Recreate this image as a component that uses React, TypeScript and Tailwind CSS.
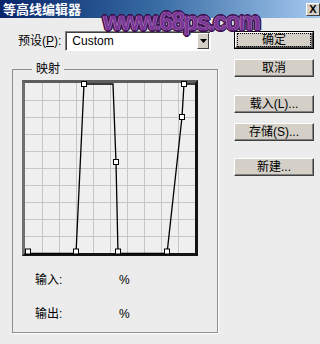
import React from "react";

const cjk = { fontFamily: '"Liberation Sans", "Noto Sans CJK SC", sans-serif' };

const points: [number, number][] = [
  [0, 170],
  [51, 170],
  [59, 1],
  [91, 79],
  [93, 170],
  [142, 170],
  [157, 34],
  [159, 1],
];

function ContourGraph() {
  const lines = [17, 34, 51, 68, 85, 102, 119, 136, 153];
  return (
    <div className="w-[176px] h-[176px] border-[3px] border-t-[#5e5e5e] border-l-[#6e6e6e] border-r-[#141414] border-b-[#141414] bg-[#efefef]">
      <svg width="170" height="170" viewBox="0 0 170 170" className="block overflow-visible">
        {lines.map((v) => (
          <g key={v}>
            <line x1={v + 0.5} y1="0" x2={v + 0.5} y2="170" stroke="#c6c6c6" strokeWidth="1" />
            <line x1="0" y1={v + 0.5} x2="170" y2={v + 0.5} stroke="#c6c6c6" strokeWidth="1" />
          </g>
        ))}
        <path
          d="M0 170.5 L51 170.5 L59 1 L88 1 L91 79 L93 170.5 L142 170.5 L157 34 L159 1 L170 1"
          fill="none"
          stroke="#000"
          strokeWidth="1.3"
        />
        {points.map(([x, y], i) => (
          <rect
            key={i}
            x={Math.max(x - 2.5, 0.5)}
            y={Math.min(y - 2.5, 166)}
            width="5"
            height="5"
            fill="#fff"
            stroke="#000"
            strokeWidth="1"
          />
        ))}
      </svg>
    </div>
  );
}

function Btn({ label, focus = false, className = "" }: { label: string; focus?: boolean; className?: string }) {
  return (
    <div
      className={`w-[80px] h-[18px] ${focus ? "border border-black" : ""} ${className}`}
    >
      <div className="w-full h-full bg-[#d4d0c8] border border-t-white border-l-white border-r-[#404040] border-b-[#404040] shadow-[inset_-1px_-1px_0_#808080] flex items-center justify-center">
        <span
          className={`text-[12px] leading-[12px] text-black px-[2px] ${focus ? "outline outline-1 outline-dotted outline-black w-[72px] h-[12px] text-center" : ""}`}
        >
          {label}
        </span>
      </div>
    </div>
  );
}

export default function App() {
  return (
    <div className="relative w-[320px] h-[344px] overflow-hidden bg-[#ececec]" style={cjk}>
      <div className="h-[18px] flex items-center justify-between pl-[3px] pr-[0px] bg-gradient-to-r from-[#0a246a] via-[#3a6ea5] to-[#a6caf0]">
        <span className="text-white font-bold text-[13px] leading-[13px]">等高线编辑器</span>
        <div className="w-[14px] h-[13px] bg-[#d4d0c8] border border-t-white border-l-white border-r-[#404040] border-b-[#404040] flex items-center justify-center text-[11px] font-bold leading-none text-black">
          X
        </div>
      </div>

      <div className="flex">
        <div className="w-[234px] pl-[12px]">
          <div className="flex items-center mt-[13px] h-[20px]">
            <span className="ml-[6px] text-[12px] text-black">
              预设(<span className="underline">P</span>):
            </span>
            <div className="ml-[4px] w-[146px] h-[20px] bg-white border border-t-[#808080] border-l-[#808080] border-r-white border-b-white shadow-[inset_1px_1px_0_#404040] flex items-center justify-between">
              <span className="pl-[6px] text-[12px] text-black">Custom</span>
              <div className="w-[12px] h-[16px] mr-[1px] bg-[#d4d0c8] border border-t-white border-l-white border-r-[#404040] border-b-[#404040] flex items-center justify-center">
                <svg width="7" height="4" viewBox="0 0 7 4">
                  <path d="M0 0 H7 L3.5 4 Z" fill="#000" />
                </svg>
              </div>
            </div>
          </div>

          <fieldset className="mt-[11px] w-[206px] h-[271px] border border-[#8e8e8e] shadow-[1px_1px_0_#fff] pl-[9px] pt-[4px]">
            <legend className="ml-[10px] px-[4px] text-[12px] leading-[14px] text-black">映射</legend>
            <ContourGraph />
            <div className="grid grid-cols-[84px_auto] gap-y-[20px] mt-[17px] pl-[13px] text-[12px] leading-[14px] text-black">
              <span>输入:</span>
              <span>%</span>
              <span>输出:</span>
              <span>%</span>
            </div>
          </fieldset>
        </div>

        <div className="flex flex-col mt-[13px]">
          <Btn label="确定" focus />
          <Btn label="取消" className="mt-[10px]" />
          <Btn label="载入(L)..." className="mt-[18px]" />
          <Btn label="存储(S)..." className="mt-[10px]" />
          <Btn label="新建..." className="mt-[17px]" />
        </div>
      </div>

      <div
        className="absolute left-[103px] top-[9px] text-[25px] font-bold tracking-[-2px] text-[#7a3596] leading-none"
        style={{
          fontFamily: '"Liberation Sans", sans-serif',
          textShadow:
            "0 0 1px #fff, 1px 1px 0 #3a0c52, -1px -1px 0 #3a0c52, 1px -1px 0 #3a0c52, -1px 1px 0 #3a0c52, 2px 0 0 #3a0c52, -2px 0 0 #3a0c52, 0 2px 0 #3a0c52, 0 -2px 0 #3a0c52",
        }}
      >
        www.68ps.com
      </div>
    </div>
  );
}
